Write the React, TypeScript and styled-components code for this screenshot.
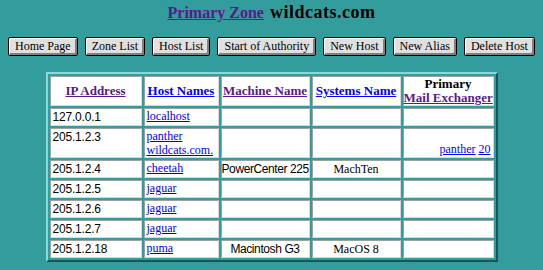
import React from 'react';
import styled, { createGlobalStyle } from 'styled-components';

interface HostRow {
    ip: string;
    hosts: string[];
    machine?: string;
    system?: string;
    mx?: { host: string; pref: string };
}

const rows: HostRow[] = [
    { ip: '127.0.0.1', hosts: ['localhost'] },
    { ip: '205.1.2.3', hosts: ['panther', 'wildcats.com.'], mx: { host: 'panther', pref: '20' } },
    { ip: '205.1.2.4', hosts: ['cheetah'], machine: 'PowerCenter 225', system: 'MachTen' },
    { ip: '205.1.2.5', hosts: ['jaguar'] },
    { ip: '205.1.2.6', hosts: ['jaguar'] },
    { ip: '205.1.2.7', hosts: ['jaguar'] },
    { ip: '205.1.2.18', hosts: ['puma'], machine: 'Macintosh G3', system: 'MacOS 8' },
];

const buttons = ['Home Page', 'Zone List', 'Host List', 'Start of Authority', 'New Host', 'New Alias', 'Delete Host'];

const GlobalStyle = createGlobalStyle`
  html, body {
    margin: 0;
    background: #339c9c;
  }
  body {
    padding: 0 8px;
    font-family: "Liberation Serif", "Times New Roman", serif;
  }
`;

const Page = styled.div`
  display: flex;
  flex-direction: column;
`;

const Title = styled.h1`
  margin: 0;
  height: 24px;
  line-height: 24px;
  text-align: center;
  font-size: 18px;
  font-weight: bold;
  letter-spacing: 0.5px;
  color: #000000;
`;

const TitleLink = styled.a`
  font-size: 16px;
  letter-spacing: 0;
  color: #5a1a8c;
  text-decoration: underline;
  margin-right: 6px;
`;

const Toolbar = styled.div`
  display: flex;
  justify-content: space-between;
  margin-top: 13px;
`;

const NavButton = styled.button`
  height: 19px;
  padding: 0 6px;
  font-family: "Liberation Serif", "Times New Roman", serif;
  font-size: 12px;
  color: #000000;
  background: #e0e0e0;
  border: 1px solid #000000;
  border-radius: 2px;
  box-shadow: inset 1px 1px 0 #ffffff, inset -2px -2px 0 #808080;
  line-height: 15px;
`;

const HostTable = styled.table`
  margin: 16px auto 0;
  width: 452px;
  table-layout: fixed;
  border-collapse: separate;
  border-spacing: 2px;
  border: 2px solid;
  border-color: #86dada #1a5656 #1a5656 #86dada;
`;

const HeadCell = styled.th<{ $w: number }>`
  width: ${p => p.$w}px;
  box-sizing: border-box;
  background: #ffffff;
  border: 1px solid;
  border-color: #a0a0a0 #d8d8d8 #d8d8d8 #a0a0a0;
  padding: 0;
  font-size: 13px;
  line-height: 14px;
  font-weight: bold;
  text-align: center;
  vertical-align: middle;
  white-space: nowrap;
`;

const Cell = styled.td<{ $align?: string; $valign?: string; $sans?: boolean; $tight?: boolean }>`
  box-sizing: border-box;
  background: #ffffff;
  border: 1px solid;
  border-color: #a0a0a0 #d8d8d8 #d8d8d8 #a0a0a0;
  padding: ${p => (p.$tight ? '1px 0' : '1px 2px')};
  height: 18px;
  font-family: ${p => (p.$sans ? '"Liberation Sans", Arial, sans-serif' : '"Liberation Serif", "Times New Roman", serif')};
  font-size: 12px;
  line-height: 14px;
  letter-spacing: ${p => (p.$tight ? '-0.4px' : p.$sans ? '-0.2px' : '0')};
  text-align: ${p => p.$align || 'left'};
  vertical-align: ${p => p.$valign || 'top'};
  white-space: nowrap;
`;

const Link = styled.a<{ $visited?: boolean }>`
  color: ${p => (p.$visited ? '#5a1a8c' : '#0000ff')};
  text-decoration: underline;
`;

const HostLink = styled(Link)`
  display: block;
`;

const HostList = styled.td`
  box-sizing: border-box;
  background: #ffffff;
  border: 1px solid;
  border-color: #a0a0a0 #d8d8d8 #d8d8d8 #a0a0a0;
  padding: 0 2px;
  font-size: 12px;
  line-height: 14px;
  vertical-align: top;
  white-space: nowrap;
`;

const App: React.FC = () => {
    return (
        <Page>
            <GlobalStyle />
            <Title>
                <TitleLink href="#">Primary Zone</TitleLink>wildcats.com
            </Title>
            <Toolbar>
                {buttons.map(b => (
                    <NavButton key={b}>{b}</NavButton>
                ))}
            </Toolbar>
            <HostTable>
                <thead>
                    <tr>
                        <HeadCell $w={92}><Link $visited href="#">IP Address</Link></HeadCell>
                        <HeadCell $w={75}><Link href="#">Host Names</Link></HeadCell>
                        <HeadCell $w={89}><Link $visited href="#">Machine Name</Link></HeadCell>
                        <HeadCell $w={89}><Link href="#">Systems Name</Link></HeadCell>
                        <HeadCell $w={91}>
                            Primary<br />
                            <Link $visited href="#">Mail Exchanger</Link>
                        </HeadCell>
                    </tr>
                </thead>
                <tbody>
                    {rows.map((row, index) => (
                        <tr key={index}>
                            <Cell $sans>{row.ip}</Cell>
                            <HostList>
                                {row.hosts.map(h => (
                                    <HostLink key={h} href="#">{h}</HostLink>
                                ))}
                            </HostList>
                            <Cell $align="center" $sans $tight>{row.machine}</Cell>
                            <Cell $align="center">{row.system}</Cell>
                            <Cell $align="right" $valign="bottom">
                                {row.mx && (
                                    <>
                                        <Link href="#">{row.mx.host}</Link> <Link href="#">{row.mx.pref}</Link>
                                    </>
                                )}
                            </Cell>
                        </tr>
                    ))}
                </tbody>
            </HostTable>
        </Page>
    );
};

export default App;
